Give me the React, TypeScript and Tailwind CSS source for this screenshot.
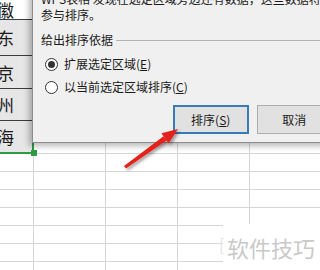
import React from "react";

const cjk = { fontFamily: '"Noto Sans CJK SC", "Noto Sans", sans-serif' };

function Radio({ checked }: { checked?: boolean }) {
  return (
    <span className="flex h-[13px] w-[13px] items-center justify-center rounded-full border border-[#333333] bg-white">
      {checked && <span className="h-[7px] w-[7px] rounded-full bg-[#333333]" />}
    </span>
  );
}

const cells = [
  { t: "安徽", h: "h-[20px]", bg: "bg-white", b: "border-b border-[#3c3c3c]" },
  { t: "山东", h: "h-[36px]", bg: "bg-[#e6e6e6]", b: "border-b border-[#3c3c3c]" },
  { t: "南京", h: "h-[33px]", bg: "bg-[#e6e6e6]", b: "border-b border-[#3c3c3c]" },
  { t: "广州", h: "h-[32px]", bg: "bg-[#e6e6e6]", b: "border-b border-[#3c3c3c]" },
  { t: "上海", h: "h-[33px]", bg: "bg-[#e6e6e6]", b: "border-b-2 border-[#2e9a45]" },
];

export default function App() {
  const rows = [0, 1, 2, 3, 4, 5, 6];
  return (
    <div className="relative h-[270px] w-[320px] overflow-hidden bg-white" style={cjk}>
      {/* spreadsheet */}
      <div className="flex flex-col">
        <div className="flex h-[154px]">
          <div className="flex w-[34px] shrink-0 flex-col border-r-2 border-[#2e9a45]">
            {cells.map((c) => (
              <div key={c.t} className={`flex items-center overflow-hidden ${c.h} ${c.bg} ${c.b}`}>
                <span className="ml-[-20px] whitespace-nowrap text-[17px] leading-[17px] text-[#1a1a1a]">{c.t}</span>
              </div>
            ))}
          </div>
          <div className="flex flex-1 border-b border-[#d6d6d6]">
            <div className="w-[72px] shrink-0 border-r border-[#d6d6d6]" />
            <div className="w-[72px] shrink-0 border-r border-[#d6d6d6]" />
            <div className="w-[72px] shrink-0 border-r border-[#d6d6d6]" />
            <div className="flex-1" />
          </div>
        </div>
        {rows.map((r) => (
          <div key={r} className="flex h-[18px] shrink-0">
            <div className="w-[34px] shrink-0 border-b border-r border-[#d6d6d6]" />
            <div className="w-[72px] shrink-0 border-b border-r border-[#d6d6d6]" />
            <div className="w-[72px] shrink-0 border-b border-r border-[#d6d6d6]" />
            <div className="w-[72px] shrink-0 border-b border-r border-[#d6d6d6]" />
            <div className="flex-1 border-b border-[#d6d6d6]" />
          </div>
        ))}
      </div>

      {/* fill handle */}
      <div className="absolute left-[31px] top-[150px] h-[6px] w-[6px] bg-[#2e9a45]" />

      {/* dialog */}
      <div className="absolute left-[32px] top-[-20px] flex h-[163px] w-[300px] flex-col border-b border-l border-[#8c8c8c] bg-[#f0f0f0] pl-[8px] pt-[11px] text-[12px] leading-[16px] text-[#1a1a1a] shadow-[-3px_3px_6px_rgba(0,0,0,0.28)]">
        <div className="whitespace-nowrap">WPS表格 发现在选定区域旁边还有数据，这些数据将</div>
        <div className="whitespace-nowrap">参与排序。</div>
        <div className="mt-[9px] flex h-[16px] items-center">
          <span className="whitespace-nowrap">给出排序依据</span>
          <span className="ml-[3px] h-px flex-1 bg-[#b4b4b4]" />
        </div>
        <div className="ml-[4px] mt-[8px] flex h-[16px] items-center gap-[6px]">
          <Radio checked />
          <span className="whitespace-nowrap">
            扩展选定区域(<span className="underline">E</span>)
          </span>
        </div>
        <div className="ml-[4px] mt-[7px] flex h-[16px] items-center gap-[6px]">
          <Radio />
          <span className="whitespace-nowrap">
            以当前选定区域排序(<span className="underline">C</span>)
          </span>
        </div>
        <div className="mt-[10px] flex gap-[8px] pl-[132px]">
          <div className="flex h-[29px] w-[76px] items-center justify-center border-2 border-[#3a7ab8] bg-[#e1e1e1]">
            排序(<span className="underline">S</span>)
          </div>
          <div className="flex h-[29px] w-[76px] items-center justify-center border border-[#adadad] bg-[#e1e1e1]">
            取消
          </div>
        </div>
      </div>

      {/* red arrow */}
      <svg className="pointer-events-none absolute left-0 top-0" width="320" height="270" viewBox="0 0 320 270">
        <defs>
          <filter id="sh" x="-20%" y="-20%" width="140%" height="140%">
            <feDropShadow dx="2" dy="2" stdDeviation="1.5" floodColor="#000" floodOpacity="0.35" />
          </filter>
        </defs>
        <g filter="url(#sh)" fill="#e3221c">
          <polygon points="124,166 126,168.5 166.5,140.5 163.5,136.3" />
          <polygon points="178,129 168.5,143.5 161.5,133.2" />
        </g>
      </svg>

      {/* watermark */}
      <div className="absolute bottom-0 left-[223px] right-0 top-[224px] bg-white pl-[4px] pt-[10px]">
        <span className="whitespace-nowrap text-[22px] leading-[26px] text-[#c9c9c9]">软件技巧</span>
      </div>
      <div className="absolute left-[219px] top-[236px] text-[16px] leading-[16px] text-[#e4e4e4]">[</div>
    </div>
  );
}
